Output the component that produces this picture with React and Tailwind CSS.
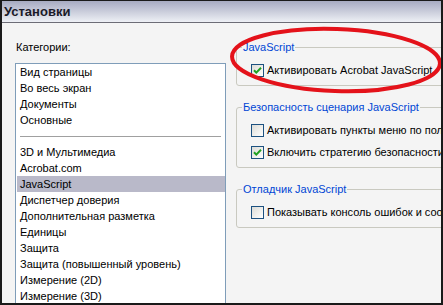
import React from 'react';

const categories = [
  ['Вид страницы', 'Во весь экран', 'Документы', 'Основные'],
  [
    '3D и Мультимедиа',
    'Acrobat.com',
    'JavaScript',
    'Диспетчер доверия',
    'Дополнительная разметка',
    'Единицы',
    'Защита',
    'Защита (повышенный уровень)',
    'Измерение (2D)',
    'Измерение (3D)',
  ],
];

const CheckBox = ({ checked }) => (
  <span className="w-[13px] h-[13px] shrink-0 border border-[#1c5180] bg-gradient-to-br from-[#dcdcd7] to-white flex items-center justify-center">
    {checked && (
      <svg width="9" height="9" viewBox="0 0 9 9">
        <path d="M1 4.2 L3.3 6.6 L8 1.8" fill="none" stroke="#21a121" strokeWidth="2" />
      </svg>
    )}
  </span>
);

const Row = ({ checked, label }) => (
  <div className="h-[16px] flex items-center whitespace-nowrap">
    <CheckBox checked={checked} />
    <span className="ml-[3px] text-[#000]">{label}</span>
  </div>
);

const Group = ({ title, className, children }) => (
  <fieldset className={`w-[320px] border border-[#c9c9c0] rounded-[3px] pl-[5px] pr-0 pb-[7px] ${className}`}>
    <legend className="px-[1px] h-[16px] leading-[16px] text-[#0046d5] whitespace-nowrap">{title}</legend>
    <div className="pl-[9px] pt-[7px] flex flex-col gap-[6px]">{children}</div>
  </fieldset>
);

export default function App() {
  return (
    <div
      className="relative w-[443px] h-[305px] overflow-hidden border-[2px] border-t-[1px] border-[#1a1a1a] bg-[#f4f4f4] text-[11px] leading-[16px]"
      style={{ fontFamily: '"Liberation Sans", Arial, sans-serif' }}
    >
      {/* title bar */}
      <div className="h-[22px] bg-gradient-to-b from-[#a7abc2] to-[#eef0f5] border-b border-[#6c6c76] pl-[2px] flex items-center">
        <span className="text-[13px] font-bold text-[#1a1a28]">Установки</span>
      </div>

      <div className="flex">
        {/* categories */}
        <div className="w-[224px] shrink-0 pl-[13px] pt-[16px]">
          <div className="pl-[1px] text-black">Категории:</div>
          <div className="mt-[8px] h-[250px] bg-white border border-[#7f9db9] border-b-0 overflow-hidden">
            {categories[0].map((c) => (
              <div key={c} className="ml-[1px] pl-[3px] h-[16px] whitespace-nowrap">{c}</div>
            ))}
            <div className="h-[16px] flex items-center px-[4px]">
              <div className="w-full h-px bg-[#a0a0a0]" />
            </div>
            {categories[1].map((c) => (
              <div
                key={c}
                className={`ml-[1px] pl-[3px] h-[16px] whitespace-nowrap ${c === 'JavaScript' ? 'bg-[#b9b9c9]' : ''}`}
              >
                {c}
              </div>
            ))}
          </div>
        </div>

        {/* settings */}
        <div className="flex-1 pl-[10px] pt-[16px] min-w-0">
          <Group title="JavaScript">
            <Row checked label="Активировать Acrobat JavaScript" />
          </Group>
          <Group title="Безопасность сценария JavaScript" className="mt-[13px]">
            <Row label="Активировать пункты меню по польз" />
            <Row checked label="Включить стратегию безопасности" />
          </Group>
          <Group title="Отладчик JavaScript" className="mt-[13px]">
            <Row label="Показывать консоль ошибок и сообщ" />
          </Group>
        </div>
      </div>

      {/* red highlight */}
      <svg className="absolute left-0 top-0 pointer-events-none" width="443" height="305">
        <ellipse
          cx="334"
          cy="59"
          rx="104"
          ry="31"
          transform="rotate(2 334 59)"
          fill="none"
          stroke="#e4121a"
          strokeWidth="4"
        />
      </svg>
    </div>
  );
}
